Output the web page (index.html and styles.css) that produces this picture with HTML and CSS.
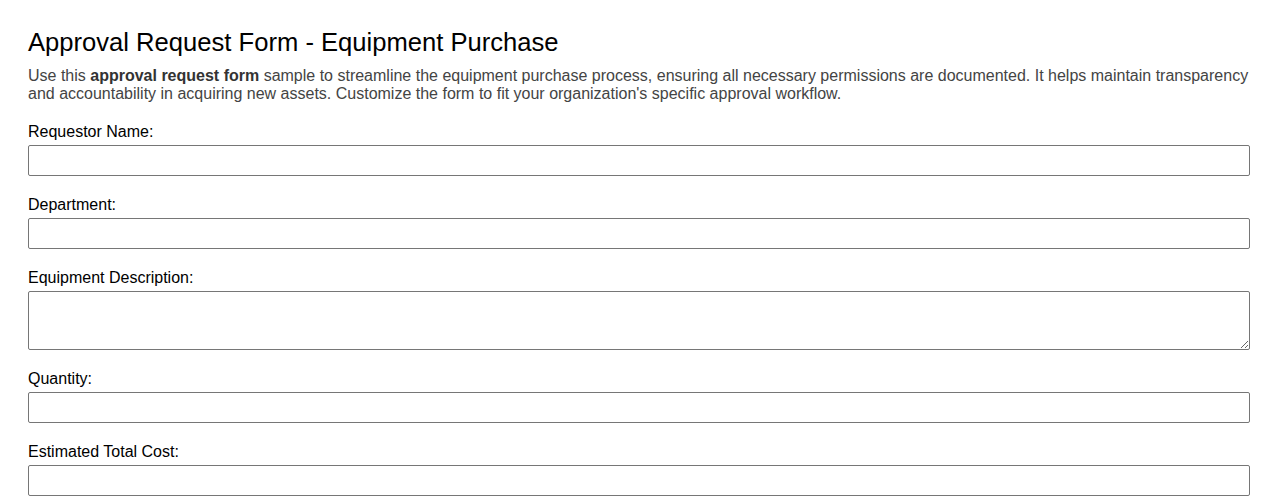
FILE: index.html
```html
<!DOCTYPE html>
<html lang="en">
<head>
<meta charset="utf-8">
<title>Approval Request Form - Equipment Purchase</title>
<link rel="stylesheet" href="styles.css">
</head>
<body>
<div class="page">
  <h1 class="title">Approval Request Form - Equipment Purchase</h1>
  <p class="intro">Use this <strong>approval request form</strong> sample to streamline the equipment purchase process, ensuring all necessary permissions are documented. It helps maintain transparency and accountability in acquiring new assets. Customize the form to fit your organization's specific approval workflow.</p>
  <form class="form">
    <div class="field">
      <label class="label" for="name">Requestor Name:</label>
      <input class="input" id="name" type="text">
    </div>
    <div class="field">
      <label class="label" for="dept">Department:</label>
      <input class="input" id="dept" type="text">
    </div>
    <div class="field">
      <label class="label" for="desc">Equipment Description:</label>
      <textarea class="input textarea" id="desc"></textarea>
    </div>
    <div class="field">
      <label class="label" for="qty">Quantity:</label>
      <input class="input" id="qty" type="text">
    </div>
    <div class="field">
      <label class="label" for="cost">Estimated Total Cost:</label>
      <input class="input" id="cost" type="text">
    </div>
  </form>
</div>
</body>
</html>
```
FILE: styles.css
```css
html, body {
  margin: 0;
  padding: 0;
  background: #fff;
}
body {
  font-family: "Liberation Sans", Arial, sans-serif;
  color: #000;
}
.page {
  padding: 26px 28px 0 28px;
}
.title {
  margin: 0;
  font-size: 25.6px;
  font-weight: normal;
  line-height: 32px;
  color: #000;
}
.intro {
  margin: 9px 0 0 0;
  font-size: 16px;
  line-height: 18px;
  color: #444;
}
.intro strong {
  font-weight: bold;
  color: #333;
}
.form {
  display: flex;
  flex-direction: column;
  gap: 19px;
  margin-top: 19px;
}
.field {
  display: flex;
  flex-direction: column;
}
.label {
  font-size: 16px;
  line-height: 18px;
  padding-top: 1px;
  margin-bottom: 4px;
  color: #000;
}
.input {
  box-sizing: border-box;
  width: 100%;
  height: 31px;
  margin: 0;
  padding: 4px 6px;
  border: 1px solid #767676;
  border-radius: 2px;
  background: #fff;
  font-family: "Liberation Sans", Arial, sans-serif;
  font-size: 16px;
}
.textarea {
  height: 59px;
  resize: vertical;
  display: block;
}
```
